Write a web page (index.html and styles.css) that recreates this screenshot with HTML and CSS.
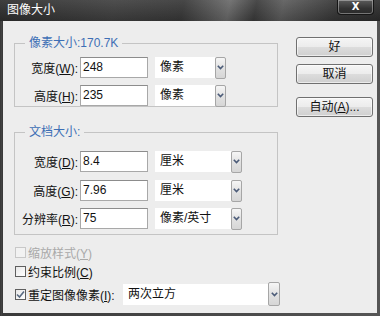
FILE: index.html
```html
<!DOCTYPE html>
<html lang="zh-CN">
<head>
    <meta charset="UTF-8">
    <title>图像大小</title>
    <link rel="stylesheet" href="styles.css">
</head>
<body>
    <div class="window">
        <div class="titlebar">
            <span class="title">图像大小</span>
            <span class="close">X</span>
        </div>
        <div class="client">
            <div class="main">
                <fieldset class="group group-pixels">
                    <legend>像素大小:170.7K</legend>
                    <div class="row">
                        <span class="label">宽度(<u>W</u>):</span>
                        <span class="field">248</span>
                        <span class="select short"><span class="val">像素</span><span class="drop"><svg width="7" height="5" viewBox="0 0 7 5"><polyline points="0.8,0.8 3.5,3.6 6.2,0.8" fill="none" stroke="#4b5b78" stroke-width="1.6"/></svg></span></span>
                    </div>
                    <div class="row">
                        <span class="label">高度(<u>H</u>):</span>
                        <span class="field">235</span>
                        <span class="select short"><span class="val">像素</span><span class="drop"><svg width="7" height="5" viewBox="0 0 7 5"><polyline points="0.8,0.8 3.5,3.6 6.2,0.8" fill="none" stroke="#4b5b78" stroke-width="1.6"/></svg></span></span>
                    </div>
                </fieldset>

                <fieldset class="group group-doc">
                    <legend>文档大小:</legend>
                    <div class="row">
                        <span class="label">宽度(<u>D</u>):</span>
                        <span class="field">8.4</span>
                        <span class="select"><span class="val">厘米</span><span class="drop"><svg width="7" height="5" viewBox="0 0 7 5"><polyline points="0.8,0.8 3.5,3.6 6.2,0.8" fill="none" stroke="#4b5b78" stroke-width="1.6"/></svg></span></span>
                    </div>
                    <div class="row">
                        <span class="label">高度(<u>G</u>):</span>
                        <span class="field">7.96</span>
                        <span class="select"><span class="val">厘米</span><span class="drop"><svg width="7" height="5" viewBox="0 0 7 5"><polyline points="0.8,0.8 3.5,3.6 6.2,0.8" fill="none" stroke="#4b5b78" stroke-width="1.6"/></svg></span></span>
                    </div>
                    <div class="row">
                        <span class="label">分辨率(<u>R</u>):</span>
                        <span class="field">75</span>
                        <span class="select"><span class="val">像素/英寸</span><span class="drop"><svg width="7" height="5" viewBox="0 0 7 5"><polyline points="0.8,0.8 3.5,3.6 6.2,0.8" fill="none" stroke="#4b5b78" stroke-width="1.6"/></svg></span></span>
                    </div>
                </fieldset>

                <div class="checks">
                    <div class="check disabled"><span class="box"></span><span>缩放样式(<u>Y</u>)</span></div>
                    <div class="check"><span class="box"></span><span>约束比例(<u>C</u>)</span></div>
                    <div class="check resample">
                        <span class="box"><svg width="9" height="9" viewBox="0 0 9 9"><polyline points="1,4.5 3.5,7 8,1.5" fill="none" stroke="#5a6b82" stroke-width="1.6"/></svg></span>
                        <span class="resample-label">重定图像像素(<u>I</u>):</span>
                        <span class="select wide"><span class="val">两次立方</span><span class="drop"><svg width="7" height="5" viewBox="0 0 7 5"><polyline points="0.8,0.8 3.5,3.6 6.2,0.8" fill="none" stroke="#4b5b78" stroke-width="1.6"/></svg></span></span>
                    </div>
                </div>
            </div>

            <div class="buttons">
                <span class="btn">好</span>
                <span class="btn">取消</span>
                <span class="btn auto">自动(<u>A</u>)...</span>
            </div>
        </div>
    </div>
</body>
</html>
```

FILE: styles.css
```css
body {
    margin: 0;
    font-family: "Liberation Sans", "Noto Sans CJK SC", sans-serif;
    font-size: 12px;
    color: #111;
    background: #3a3a3a;
}
.window {
    width: 380px;
    height: 316px;
    display: flex;
    flex-direction: column;
    background: linear-gradient(90deg, #2a2a2a, #4a4a4a 1px, #3a3a3a 2px, #555 100%);
}
.titlebar {
    height: 21px;
    display: flex;
    justify-content: space-between;
    align-items: flex-start;
    background:
        linear-gradient(180deg, rgba(255,255,255,0.08), rgba(0,0,0,0.15)),
        linear-gradient(100deg, #2e2e2e 0%, #404040 30%, #383838 48%, #6a6a6a 60%, #3b3b3b 67%, #5c5c5c 74%, #363636 88%, #2c2c2c 100%);
}
.title {
    color: #fff;
    font-size: 12px;
    line-height: 21px;
    padding-left: 7px;
}
.close {
    width: 37px;
    height: 15px;
    margin-right: 6px;
    box-sizing: border-box;
    border: 1px solid #151515;
    border-top: none;
    border-radius: 0 0 4px 4px;
    background: linear-gradient(180deg, #5c5c5c, #333 60%, #2a2a2a);
    box-shadow: inset 0 0 0 1px rgba(255,255,255,0.35);
    color: #fff;
    font-family: "DejaVu Sans", sans-serif;
    font-weight: bold;
    font-size: 10px;
    line-height: 14px;
    text-align: center;
}
.client {
    flex: 1;
    margin: 0 3px 3px 3px;
    padding: 15px 4px 0 11px;
    background: #ededed;
    display: flex;
    gap: 16px;
}
.main {
    width: 266px;
    display: flex;
    flex-direction: column;
}
.group {
    width: 264px;
    box-sizing: border-box;
    margin: 0;
    border: 1px solid #c4c4c4;
    min-width: 0;
}
.group legend {
    margin-left: 10px;
    padding: 0 4px;
    color: #3e6fb5;
    line-height: 14px;
}
.group-pixels {
    padding: 7px 0 0 0;
}
.group-doc {
    margin-top: 18px;
    padding: 12px 0 5px 0;
}
.row {
    display: flex;
    align-items: center;
    height: 21px;
}
.row + .row {
    margin-top: 7px;
}
.group-doc .row:nth-child(3) {
    margin-top: 8px;
}
.label {
    width: 63px;
    margin-right: 2px;
    text-align: right;
    white-space: nowrap;
}
.field {
    width: 68px;
    height: 21px;
    box-sizing: border-box;
    border: 1px solid #a8a8a8;
    border-top-color: #8c8c8c;
    background: #fff;
    padding-left: 2px;
    line-height: 19px;
}
.select {
    margin-left: 7px;
    display: flex;
    align-items: center;
}
.select .val {
    width: 76px;
    height: 21px;
    box-sizing: border-box;
    background: #fff;
    padding-left: 5px;
    line-height: 21px;
    white-space: nowrap;
    overflow: hidden;
}
.select.short .val {
    width: 60px;
}
.drop {
    width: 11px;
    height: 22px;
    box-sizing: border-box;
    border: 1px solid #a6a6a6;
    border-radius: 2px;
    background: linear-gradient(180deg, #f6f6f6, #e2e2e2 50%, #d6d6d6);
    display: flex;
    align-items: center;
    justify-content: center;
}
.checks {
    margin-top: 9px;
    display: flex;
    flex-direction: column;
}
.check {
    display: flex;
    align-items: center;
    height: 16px;
    margin-left: 1px;
}
.check + .check {
    margin-top: 3px;
}
.check .box {
    width: 11px;
    height: 11px;
    box-sizing: border-box;
    border: 1px solid #5e5e5e;
    background: linear-gradient(135deg, #e8e8e8, #fff);
    margin-right: 2px;
    display: flex;
    align-items: center;
    justify-content: center;
}
.check.disabled {
    color: #a9a9a9;
}
.check.disabled .box {
    border-color: #c8c8c8;
    background: #f2f2f2;
}
.check.resample {
    height: 22px;
    margin-top: 4px;
}
.resample-label {
    width: 95px;
}
.select.wide {
    margin-left: 0;
}
.select.wide .val {
    width: 145px;
}
.select.wide .drop {
    width: 12px;
    height: 24px;
}
.buttons {
    width: 77px;
    margin-top: 1px;
    display: flex;
    flex-direction: column;
}
.btn {
    height: 20px;
    box-sizing: border-box;
    border: 1px solid #707070;
    border-radius: 3px;
    background: linear-gradient(180deg, #f5f5f5, #ececec 48%, #dcdcdc 52%, #cfcfcf);
    box-shadow: inset 0 0 0 1px rgba(255,255,255,0.6);
    text-align: center;
    line-height: 18px;
}
.btn + .btn {
    margin-top: 7px;
}
.btn.auto {
    margin-top: 13px;
}
```
